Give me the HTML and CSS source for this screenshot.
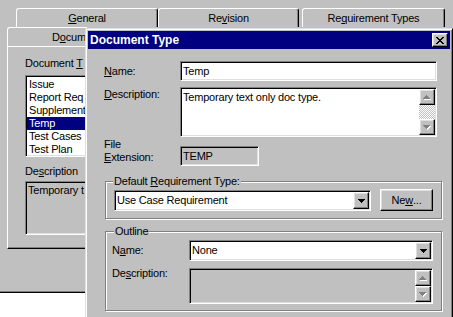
FILE: index.html
```html
<!DOCTYPE html>
<html>
<head>
<meta charset="utf-8">
<link rel="stylesheet" href="styles.css">
</head>
<body>
<div class="sheet">
  <div class="tabrow back">
    <div class="tab t-general"><u>G</u>eneral</div>
    <div class="tab t-revision">Re<u>v</u>ision</div>
    <div class="tab t-reqtypes">Re<u>q</u>uirement Types</div>
  </div>
  <div class="tabrow front">
    <div class="tab t-doc"><span class="doctab-text">D<u>o</u>cum</span></div>
  </div>
  <div class="panel">
    <div class="plabel">Document <u>T</u></div>
    <div class="listbox sunken">
      <div class="item">Issue</div>
      <div class="item">Report Req</div>
      <div class="item">Supplement</div>
      <div class="item selected">Temp</div>
      <div class="item">Test Cases</div>
      <div class="item">Test Plan</div>
    </div>
    <div class="plabel desc-label">De<u>s</u>cription</div>
    <div class="descbox sunken">Temporary t</div>
  </div>
</div>

<div class="dialog">
  <div class="titlebar">
    <span class="title">Document Type</span>
    <div class="closebtn raised">
      <svg width="8" height="7" viewBox="0 0 8 7" shape-rendering="crispEdges"><path d="M0 0h2v1H0zM6 0h2v1H6zM1 1h2v1H1zM5 1h2v1H5zM2 2h4v1H2zM3 3h2v1H3zM2 4h4v1H2zM1 5h2v1H1zM5 5h2v1H5zM0 6h2v1H0zM6 6h2v1H6z" fill="#000"/></svg>
    </div>
  </div>
  <div class="dbody">
    <div class="row row-name">
      <div class="flabel"><u>N</u>ame:</div>
      <div class="field sunken white"><span class="ftext">Temp</span></div>
    </div>
    <div class="row row-desc">
      <div class="flabel top"><u>D</u>escription:</div>
      <div class="field multi sunken white">
        <span class="mtext">Temporary text only doc type.</span>
        <div class="vscroll">
          <div class="sbtn raised">
            <svg width="8" height="5" viewBox="0 0 8 5" shape-rendering="crispEdges"><path d="M4 1h1v1H4zM3 2h3v1H3zM2 3h5v1H2zM1 4h7v1H1z" fill="#fff"/><path d="M3 0h1v1H3zM2 1h3v1H2zM1 2h5v1H1zM0 3h7v1H0z" fill="#808080"/></svg>
          </div>
          <div class="track"></div>
          <div class="sbtn raised">
            <svg width="8" height="5" viewBox="0 0 8 5" shape-rendering="crispEdges"><path d="M1 1h7v1H1zM2 2h5v1H2zM3 3h3v1H3zM4 4h1v1H4z" fill="#fff"/><path d="M0 0h7v1H0zM1 1h5v1H1zM2 2h3v1H2zM3 3h1v1H3z" fill="#808080"/></svg>
          </div>
        </div>
      </div>
    </div>
    <div class="row row-ext">
      <div class="flabel two">File<br><u>E</u>xtension:</div>
      <div class="field sunken gray ext"><span class="ftext">TEMP</span></div>
    </div>

    <div class="group g1">
      <div class="legend">Default <u>R</u>equirement Type:</div>
      <div class="g1row">
        <div class="combo sunken white c1">
          <span class="ctext">Use Case Requirement</span>
          <div class="dropbtn raised">
            <svg width="7" height="4" viewBox="0 0 7 4" shape-rendering="crispEdges"><path d="M0 0h7v1H0zM1 1h5v1H1zM2 2h3v1H2zM3 3h1v1H3z" fill="#000"/></svg>
          </div>
        </div>
        <div class="pushbtn raised">Ne<u>w</u> ...</div>
      </div>
    </div>

    <div class="group g2">
      <div class="legend">Outline</div>
      <div class="g2grid">
        <div class="glabel">N<u>a</u>me:</div>
        <div class="combo sunken white c2">
          <span class="ctext">None</span>
          <div class="dropbtn raised">
            <svg width="7" height="4" viewBox="0 0 7 4" shape-rendering="crispEdges"><path d="M0 0h7v1H0zM1 1h5v1H1zM2 2h3v1H2zM3 3h1v1H3z" fill="#000"/></svg>
          </div>
        </div>
        <div class="glabel top">De<u>s</u>cription:</div>
        <div class="outdesc sunken gray">
          <div class="vscroll short">
            <div class="sbtn raised">
              <svg width="8" height="5" viewBox="0 0 8 5" shape-rendering="crispEdges"><path d="M4 1h1v1H4zM3 2h3v1H3zM2 3h5v1H2zM1 4h7v1H1z" fill="#fff"/><path d="M3 0h1v1H3zM2 1h3v1H2zM1 2h5v1H1zM0 3h7v1H0z" fill="#808080"/></svg>
            </div>
            <div class="sbtn raised">
              <svg width="8" height="5" viewBox="0 0 8 5" shape-rendering="crispEdges"><path d="M1 1h7v1H1zM2 2h5v1H2zM3 3h3v1H3zM4 4h1v1H4z" fill="#fff"/><path d="M0 0h7v1H0zM1 1h5v1H1zM2 2h3v1H2zM3 3h1v1H3z" fill="#808080"/></svg>
            </div>
          </div>
        </div>
      </div>
    </div>
  </div>
</div>
</body>
</html>
```

FILE: styles.css
```css
* { box-sizing: border-box; }
html, body { margin: 0; padding: 0; }
body {
  width: 453px;
  height: 317px;
  overflow: hidden;
  position: relative;
  background: #ffffff;
  font-family: "Liberation Sans", Arial, sans-serif;
  font-size: 11px;
  line-height: 13px;
  letter-spacing: -0.2px;
  color: #000;
}
u { text-decoration: underline; text-underline-offset: 1px; }

.sunken {
  border: 1px solid;
  border-color: #808080 #ffffff #ffffff #808080;
  box-shadow: inset 1px 1px #000, inset -1px -1px #dfdfdf;
}
.raised {
  border: 1px solid;
  border-color: #ffffff #000 #000 #ffffff;
  box-shadow: inset -1px -1px #808080, inset 1px 1px #dfdfdf;
  background: #c0c0c0;
}
.white { background: #fff; }
.gray { background: #c0c0c0; }

/* back property sheet */
.sheet {
  height: 293px;
  background: #c0c0c0;
  border-bottom: 1px solid #000;
  box-shadow: inset 0 -1px #808080;
  padding-top: 8px;
  display: flex;
  flex-direction: column;
}
.tabrow { display: flex; height: 19px; flex: none; }
.tabrow.back { padding-left: 16px; }
.tabrow.front { padding-left: 7px; width: 87px; overflow: hidden; }
.tab {
  height: 19px;
  flex: none;
  border-top: 1px solid #fff;
  border-left: 1px solid #fff;
  border-right: 1px solid #000;
  box-shadow: inset -1px 0 #808080;
  border-radius: 3px 3px 0 0;
  display: flex;
  align-items: center;
  justify-content: center;
  white-space: nowrap;
}
.t-general { width: 142px; }
.t-revision { width: 141px; }
.t-reqtypes { width: 143px; margin-left: 3px; }
.t-doc { width: 170px; justify-content: flex-start; padding-left: 44px; }

.panel {
  margin-left: 7px;
  width: 80px;
  height: 203px;
  flex: none;
  border-top: 1px solid #fff;
  border-left: 1px solid #fff;
  border-bottom: 1px solid #000;
  box-shadow: inset 0 -1px #808080;
  padding: 10px 0 0 17px;
  display: flex;
  flex-direction: column;
  align-items: flex-start;
  overflow: hidden;
}
.plabel { white-space: nowrap; }
.listbox {
  margin-top: 5px;
  width: 80px;
  height: 82px;
  flex: none;
  background: #fff;
  padding: 2px 1px 0 1px;
  overflow: hidden;
}
.item { height: 13px; padding-left: 2px; white-space: nowrap; }
.item.selected { background: #000080; color: #fff; }
.desc-label { margin-top: 8px; }
.descbox {
  margin-top: 3px;
  width: 80px;
  height: 54px;
  flex: none;
  background: #c0c0c0;
  padding: 2px 0 0 2px;
  white-space: nowrap;
  overflow: hidden;
}

/* front dialog */
.dialog {
  position: absolute;
  left: 85px;
  top: 28px;
  width: 368px;
  height: 300px;
  background: #c0c0c0;
  border: 1px solid;
  border-color: #dfdfdf #000 #000 #dfdfdf;
  box-shadow: inset 1px 1px #fff, inset -1px -1px #808080;
  padding: 2px;
  display: flex;
  flex-direction: column;
}
.titlebar {
  height: 18px;
  flex: none;
  background: #000080;
  color: #fff;
  display: flex;
  align-items: center;
  justify-content: space-between;
  padding-left: 2px;
}
.title { font-weight: bold; font-size: 12px; letter-spacing: 0; }
.closebtn {
  width: 16px;
  height: 14px;
  margin-right: 2px;
  display: flex;
  align-items: center;
  justify-content: center;
}
.closebtn svg { display: block; margin-left: -1px; }

.dbody {
  padding-left: 16px;
  display: flex;
  flex-direction: column;
  align-items: flex-start;
}
.row { display: flex; }
.flabel { width: 76px; white-space: nowrap; }
.field { width: 257px; display: flex; }
.row-name { margin-top: 12px; height: 20px; align-items: center; }
.row-name .field { height: 20px; align-items: center; padding-left: 2px; }

.row-desc { margin-top: 6px; height: 50px; align-items: flex-start; }
.flabel.top { padding-top: 1px; }
.field.multi { height: 50px; align-items: flex-start; }
.mtext { padding: 3px 0 0 2px; white-space: nowrap; }
.vscroll {
  margin: 1px 1px 1px auto;
  width: 16px;
  height: 46px;
  display: flex;
  flex-direction: column;
}
.vscroll.short { height: 32px; }
.sbtn {
  width: 16px;
  height: 16px;
  flex: none;
  display: flex;
  align-items: center;
  justify-content: center;
}
.sbtn svg { display: block; }
.track {
  flex: 1;
  background-color: #fff;
  background-image: repeating-conic-gradient(#c0c0c0 0 25%, #fff 0 50%);
  background-size: 2px 2px;
}

.row-ext { margin-top: 9px; height: 20px; align-items: flex-end; }
.flabel.two { margin-bottom: 2px; }
.field.ext { width: 79px; height: 20px; align-items: center; padding-left: 2px; }

.group {
  border: 1px solid #808080;
  box-shadow: inset 1px 1px #fff, 1px 1px #fff;
  width: 337px;
  margin-left: 1px;
  display: flex;
  flex-direction: column;
  align-items: flex-start;
}
.legend {
  margin-top: -7px;
  background: #c0c0c0;
  padding: 0 1px;
  height: 13px;
  white-space: nowrap;
}
.g1 { margin-top: 15px; height: 38px; padding-left: 7px; }
.g1row { display: flex; align-items: flex-start; margin-top: 1px; margin-left: 1px; }
.combo {
  height: 21px;
  display: flex;
  align-items: center;
  padding-left: 2px;
}
.c1 { width: 257px; margin-top: 1px; }
.c2 { width: 244px; }
.ctext { white-space: nowrap; }
.dropbtn {
  margin: 1px 1px 1px auto;
  width: 16px;
  height: 17px;
  display: flex;
  align-items: center;
  justify-content: center;
}
.dropbtn svg { display: block; }
.pushbtn {
  margin-left: 9px;
  width: 53px;
  height: 22px;
  display: flex;
  align-items: center;
  justify-content: center;
  white-space: nowrap;
}

.g2 { margin-top: 12px; height: 80px; padding-left: 6px; }
.g2 .legend { margin-left: 2px; }
.g2grid {
  display: grid;
  grid-template-columns: 77px 244px;
  grid-template-rows: 21px 36px;
  row-gap: 7px;
  margin-top: 2px;
}
.glabel { white-space: nowrap; align-self: center; }
.glabel.top { align-self: start; margin-top: -1px; }
.outdesc {
  width: 244px;
  height: 36px;
  display: flex;
}
```
